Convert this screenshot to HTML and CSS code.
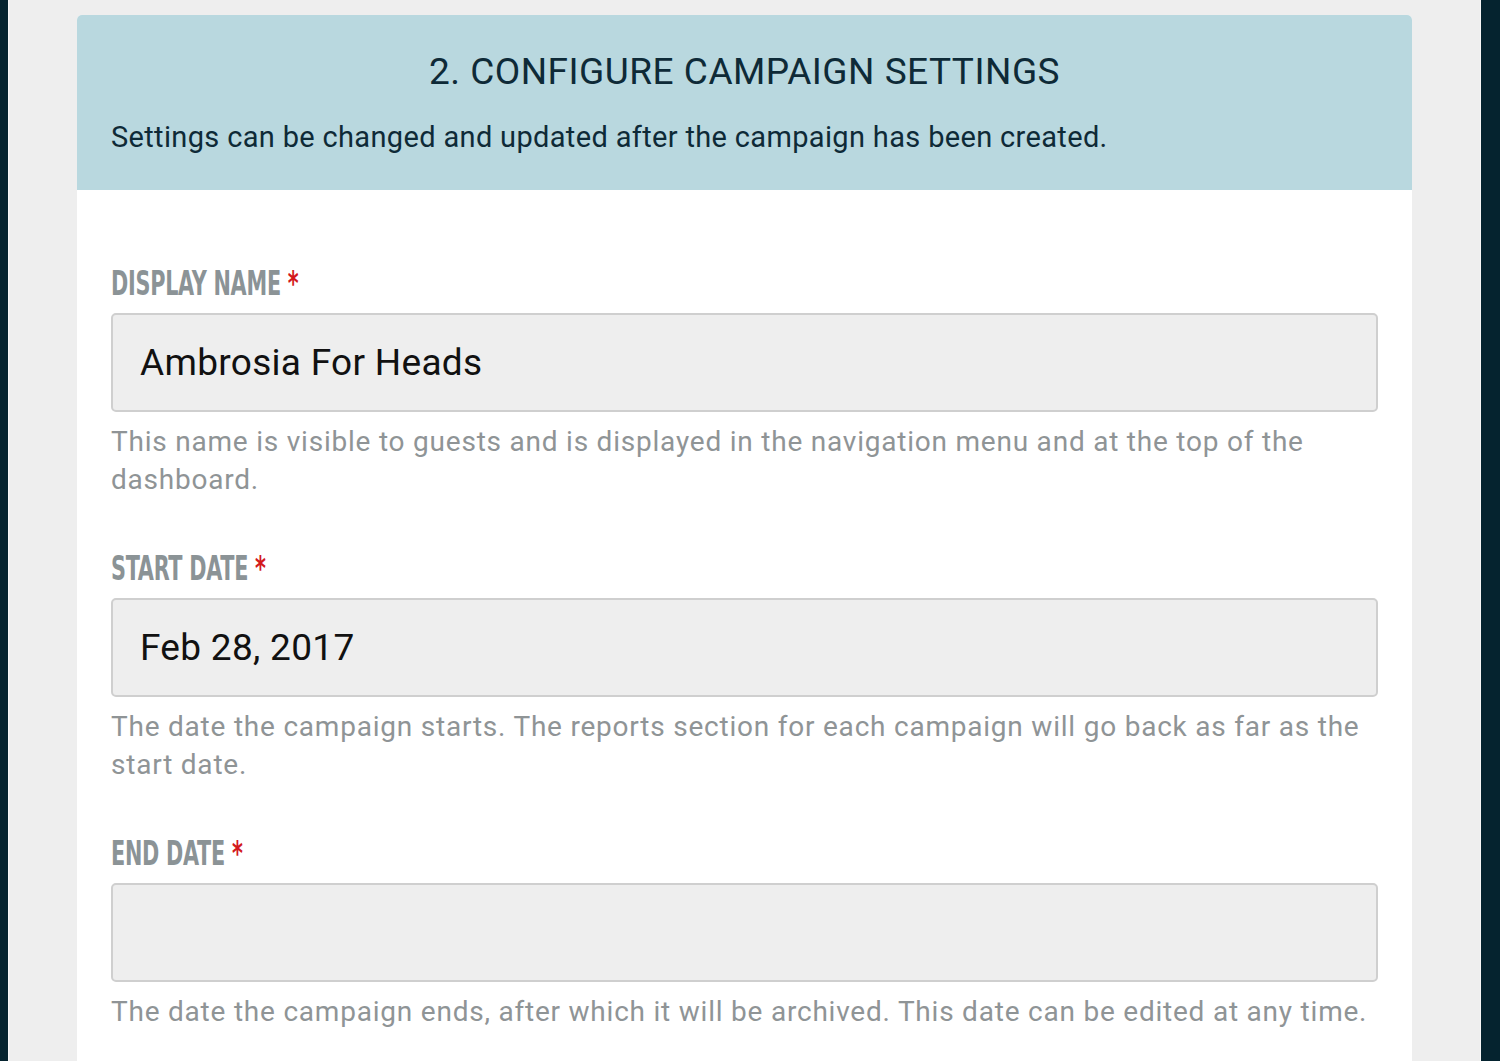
FILE: index.html
```html
<!DOCTYPE html>
<html lang="en">
<head>
<meta charset="utf-8">
<title>Configure Campaign Settings</title>
<link rel="stylesheet" href="styles.css">
</head>
<body>
<div class="layout">
  <aside class="rail rail-left"></aside>
  <main class="main">
    <section class="card">
      <header class="card-head">
        <h1 class="card-title">2. CONFIGURE CAMPAIGN SETTINGS</h1>
        <p class="card-sub">Settings can be changed and updated after the campaign has been created.</p>
      </header>
      <div class="card-body">
        <div class="field">
          <label class="field-label"><span class="label-inner">DISPLAY NAME <span class="req">*</span></span></label>
          <div class="field-input">Ambrosia For Heads</div>
          <p class="field-help">This name is visible to guests and is displayed in the navigation menu and at the top of the dashboard.</p>
        </div>
        <div class="field">
          <label class="field-label"><span class="label-inner">START DATE <span class="req">*</span></span></label>
          <div class="field-input">Feb 28, 2017</div>
          <p class="field-help">The date the campaign starts. The reports section for each campaign will go back as far as the start date.</p>
        </div>
        <div class="field">
          <label class="field-label"><span class="label-inner">END DATE <span class="req">*</span></span></label>
          <div class="field-input"></div>
          <p class="field-help">The date the campaign ends, after which it will be archived. This date can be edited at any time.</p>
        </div>
      </div>
    </section>
  </main>
  <aside class="rail rail-right"></aside>
</div>
</body>
</html>
```
FILE: styles.css
```css
html, body {
  margin: 0;
  padding: 0;
  height: 100%;
  overflow: hidden;
}
body {
  background: #eeeeee;
  font-family: Roboto, "Liberation Sans", sans-serif;
}
.layout {
  display: flex;
  height: 1061px;
}
.rail {
  background: #05232f;
  flex: none;
}
.rail-left {
  width: 8px;
  border-right: 1px solid #f7f7f7;
}
.rail-right {
  width: 19px;
  border-left: 1px solid #f7f7f7;
}
.main {
  flex: 1;
  padding: 15px 68px 0 68px;
  background: #eeeeee;
}
.card {
  background: #ffffff;
  border-radius: 5px 5px 0 0;
  min-height: 1100px;
}
.card-head {
  background: #b9d8df;
  border-radius: 5px 5px 0 0;
  height: 175px;
  box-sizing: border-box;
  padding: 35px 34px 0 34px;
  color: #0e2a37;
}
.card-title {
  margin: 0;
  text-align: center;
  font-weight: 400;
  font-size: 37px;
  line-height: 44px;
  letter-spacing: 0.5px;
}
.card-sub {
  margin: 25px 0 0 0;
  font-size: 29px;
  line-height: 36px;
  letter-spacing: 0.34px;
}
.card-body {
  padding: 74px 34px 0 34px;
}
.field {
  margin-bottom: 50px;
}
.field-label {
  display: block;
  height: 38px;
  font-family: "Liberation Sans Narrow", "DejaVu Sans Condensed", sans-serif;
  font-weight: 700;
  font-size: 34px;
  line-height: 38px;
  color: #8b9396;
  letter-spacing: -0.4px;
}
.label-inner {
  display: inline-block;
  transform: scaleX(0.68);
  transform-origin: left center;
  white-space: nowrap;
}
.req {
  color: #d3191c;
}
.field-input {
  margin-top: 11px;
  height: 99px;
  box-sizing: border-box;
  background: #eeeeee;
  border: 2px solid #cfcfcf;
  border-radius: 5px;
  padding: 0 27px;
  display: flex;
  align-items: center;
  font-size: 37px;
  letter-spacing: 0.3px;
  color: #111111;
}
.field-help {
  margin: 11px 0 0 0;
  font-size: 28px;
  line-height: 38px;
  letter-spacing: 0.78px;
  color: #8f9496;
}
```
